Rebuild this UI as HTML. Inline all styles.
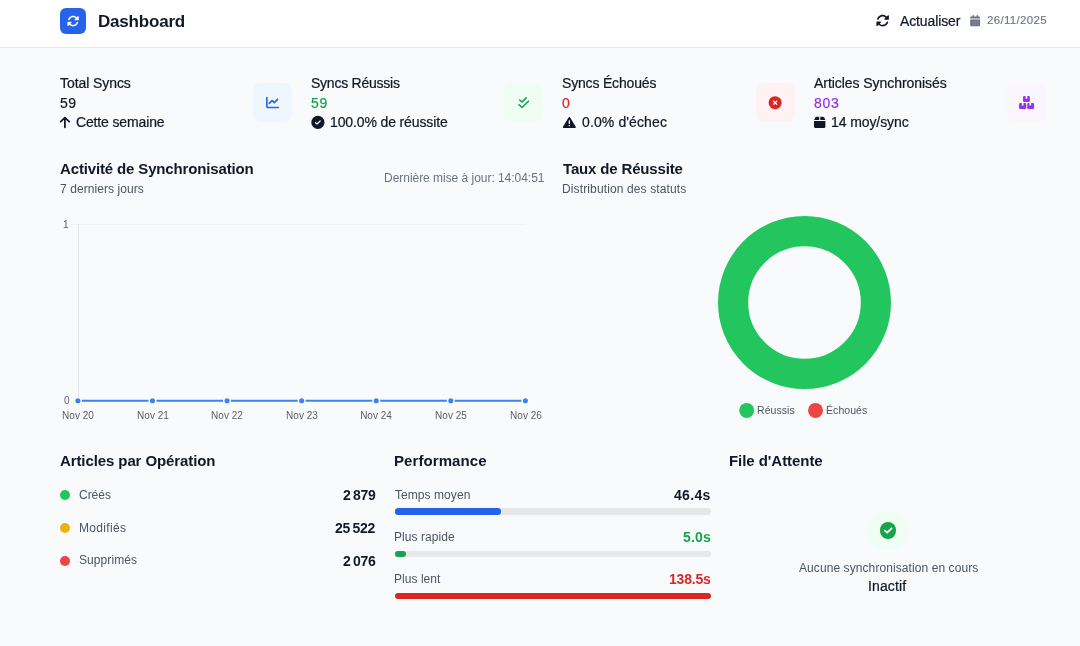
<!DOCTYPE html>
<html lang="fr">
<head>
<meta charset="utf-8">
<title>Dashboard</title>
<style>
*{box-sizing:border-box;margin:0;padding:0}
html,body{width:1080px;height:646px;overflow:hidden}
body{background:#f9fafb;font-family:"Liberation Sans",sans-serif;color:#111827;position:relative}
.t{position:absolute;white-space:nowrap;will-change:transform}
.hd{position:absolute;left:0;top:0;width:1080px;height:48px;background:#fff;border-bottom:1px solid #e8eaed}
.b{position:absolute}
svg{position:absolute;overflow:visible}
</style>
</head>
<body>
<div class="hd"></div>
<div class="b" style="left:60px;top:8px;width:26px;height:26px;border-radius:6px;background:#2563eb"></div>
<div class="t" style="top:12.91px;font-size:17px;line-height:17px;color:#111827;font-weight:700;letter-spacing:-0.193px;left:98.13px;">Dashboard</div>
<div class="t" style="top:13.65px;font-size:14px;line-height:14px;color:#111827;-webkit-text-stroke:0.22px #111827;letter-spacing:-0.125px;left:900.07px;">Actualiser</div>
<div class="t" style="top:15.12px;font-size:11.5px;line-height:11.5px;color:#6b7280;-webkit-text-stroke:0.12px #6b7280;letter-spacing:0.316px;left:986.72px;">26/11/2025</div>
<div class="t" style="top:76.40px;font-size:14px;line-height:14px;color:#111827;-webkit-text-stroke:0.22px #111827;letter-spacing:-0.077px;left:60.19px;">Total Syncs</div>
<div class="t" style="top:96.15px;font-size:14px;line-height:14px;color:#111827;-webkit-text-stroke:0.22px #111827;letter-spacing:0.400px;left:59.94px;">59</div>
<div class="t" style="top:115.15px;font-size:14px;line-height:14px;color:#111827;-webkit-text-stroke:0.22px #111827;letter-spacing:-0.142px;left:76.30px;">Cette semaine</div>
<div class="t" style="top:76.40px;font-size:14px;line-height:14px;color:#111827;-webkit-text-stroke:0.22px #111827;letter-spacing:-0.244px;left:310.87px;">Syncs Réussis</div>
<div class="t" style="top:96.15px;font-size:14px;line-height:14px;color:#16a34a;-webkit-text-stroke:0.22px #16a34a;letter-spacing:0.650px;left:310.94px;">59</div>
<div class="t" style="top:115.15px;font-size:14px;line-height:14px;color:#111827;-webkit-text-stroke:0.22px #111827;letter-spacing:-0.128px;left:330.44px;">100.0% de réussite</div>
<div class="t" style="top:76.40px;font-size:14px;line-height:14px;color:#111827;-webkit-text-stroke:0.22px #111827;letter-spacing:-0.176px;left:562.37px;">Syncs Échoués</div>
<div class="t" style="top:96.15px;font-size:14px;line-height:14px;color:#dc2626;-webkit-text-stroke:0.22px #dc2626;left:562.45px;">0</div>
<div class="t" style="top:115.15px;font-size:14px;line-height:14px;color:#111827;-webkit-text-stroke:0.22px #111827;letter-spacing:0.117px;left:582.45px;">0.0% d'échec</div>
<div class="t" style="top:76.40px;font-size:14px;line-height:14px;color:#111827;-webkit-text-stroke:0.22px #111827;letter-spacing:-0.052px;left:814.22px;">Articles Synchronisés</div>
<div class="t" style="top:96.15px;font-size:14px;line-height:14px;color:#9333ea;-webkit-text-stroke:0.22px #9333ea;letter-spacing:0.676px;left:813.90px;">803</div>
<div class="t" style="top:115.15px;font-size:14px;line-height:14px;color:#111827;-webkit-text-stroke:0.22px #111827;letter-spacing:-0.090px;left:831.44px;">14 moy/sync</div>
<div class="b" style="left:253px;top:83px;width:39px;height:39px;border-radius:8px;background:#eff6ff"></div>
<div class="b" style="left:504.25px;top:83px;width:39px;height:39px;border-radius:8px;background:#f0fdf4"></div>
<div class="b" style="left:755.5px;top:83px;width:39px;height:39px;border-radius:8px;background:#fef2f2"></div>
<div class="b" style="left:1006.75px;top:83px;width:39px;height:39px;border-radius:8px;background:#faf5ff"></div>
<div class="t" style="top:161.10px;font-size:15px;line-height:15px;color:#111827;font-weight:700;letter-spacing:-0.145px;left:60.14px;">Activité de Synchronisation</div>
<div class="t" style="top:161.10px;font-size:15px;line-height:15px;color:#111827;font-weight:700;letter-spacing:-0.159px;left:562.94px;">Taux de Réussite</div>
<div class="t" style="top:182.84px;font-size:12px;line-height:12px;color:#4b5563;letter-spacing:0.073px;left:59.89px;">7 derniers jours</div>
<div class="t" style="top:182.84px;font-size:12px;line-height:12px;color:#4b5563;letter-spacing:0.127px;left:562.12px;">Distribution des statuts</div>
<div class="t" style="top:171.64px;font-size:12px;line-height:12px;color:#6b7280;letter-spacing:-0.033px;left:383.72px;">Dernière mise à jour: 14:04:51</div>
<svg width="1080" height="646" style="left:0;top:0" viewBox="0 0 1080 646"><line x1="71" y1="224.5" x2="526" y2="224.5" stroke="#000" stroke-opacity="0.03" stroke-width="1"/><line x1="78.5" y1="224" x2="78.5" y2="401" stroke="#000" stroke-opacity="0.09" stroke-width="1"/><line x1="77.9" y1="400.75" x2="525.38" y2="400.75" stroke="#3b82f6" stroke-width="2"/><circle cx="77.90" cy="400.75" r="3.3" fill="#3b82f6" stroke="#fbfcfd" stroke-width="1.5"/><circle cx="152.48" cy="400.75" r="3.3" fill="#3b82f6" stroke="#fbfcfd" stroke-width="1.5"/><circle cx="227.06" cy="400.75" r="3.3" fill="#3b82f6" stroke="#fbfcfd" stroke-width="1.5"/><circle cx="301.64" cy="400.75" r="3.3" fill="#3b82f6" stroke="#fbfcfd" stroke-width="1.5"/><circle cx="376.22" cy="400.75" r="3.3" fill="#3b82f6" stroke="#fbfcfd" stroke-width="1.5"/><circle cx="450.80" cy="400.75" r="3.3" fill="#3b82f6" stroke="#fbfcfd" stroke-width="1.5"/><circle cx="525.38" cy="400.75" r="3.3" fill="#3b82f6" stroke="#fbfcfd" stroke-width="1.5"/><circle cx="804.5" cy="302.5" r="71.4" fill="none" stroke="#22c55e" stroke-width="30.2"/><circle cx="746.7" cy="410.4" r="7.5" fill="#22c55e"/><circle cx="815.5" cy="410.4" r="7.5" fill="#ef4444"/></svg>
<div class="t" style="top:220.13px;font-size:10px;line-height:10px;color:#5a5f66;right:1011.12px;">1</div>
<div class="t" style="top:396.04px;font-size:10px;line-height:10px;color:#5a5f66;right:1010.92px;">0</div>
<div class="t" style="top:410.64px;font-size:10px;line-height:10px;color:#5a5f66;letter-spacing:0.024px;left:-21.99px;width:200px;text-align:center;">Nov 20</div>
<div class="t" style="top:410.64px;font-size:10px;line-height:10px;color:#5a5f66;letter-spacing:0.044px;left:52.60px;width:200px;text-align:center;">Nov 21</div>
<div class="t" style="top:410.64px;font-size:10px;line-height:10px;color:#5a5f66;letter-spacing:0.048px;left:127.18px;width:200px;text-align:center;">Nov 22</div>
<div class="t" style="top:410.64px;font-size:10px;line-height:10px;color:#5a5f66;letter-spacing:0.034px;left:201.76px;width:200px;text-align:center;">Nov 23</div>
<div class="t" style="top:410.64px;font-size:10px;line-height:10px;color:#5a5f66;letter-spacing:0.006px;left:276.32px;width:200px;text-align:center;">Nov 24</div>
<div class="t" style="top:410.64px;font-size:10px;line-height:10px;color:#5a5f66;letter-spacing:0.030px;left:350.91px;width:200px;text-align:center;">Nov 25</div>
<div class="t" style="top:410.64px;font-size:10px;line-height:10px;color:#5a5f66;letter-spacing:0.034px;left:425.50px;width:200px;text-align:center;">Nov 26</div>
<div class="t" style="top:404.86px;font-size:10.5px;line-height:10.5px;color:#4b5563;letter-spacing:0.048px;left:756.94px;">Réussis</div>
<div class="t" style="top:404.86px;font-size:10.5px;line-height:10.5px;color:#4b5563;letter-spacing:0.062px;left:825.94px;">Échoués</div>
<div class="t" style="top:453.40px;font-size:15px;line-height:15px;color:#111827;font-weight:700;letter-spacing:-0.098px;left:60.04px;">Articles par Opération</div>
<div class="t" style="top:453.40px;font-size:15px;line-height:15px;color:#111827;font-weight:700;letter-spacing:0.079px;left:394.41px;">Performance</div>
<div class="t" style="top:453.40px;font-size:15px;line-height:15px;color:#111827;font-weight:700;letter-spacing:-0.053px;left:729.41px;">File d'Attente</div>
<div class="b" style="left:60px;top:490px;width:10px;height:10px;border-radius:50%;background:#22c55e"></div>
<div class="t" style="top:488.94px;font-size:12px;line-height:12px;color:#4b5563;letter-spacing:-0.021px;left:79.30px;">Créés</div>
<div class="t" style="right:704.7px;top:488.35px;font-size:14px;line-height:14px;font-weight:700;letter-spacing:-0.28px"><span style="margin-right:2.4px">2</span>879</div>
<div class="b" style="left:60px;top:522.8px;width:10px;height:10px;border-radius:50%;background:#eab308"></div>
<div class="t" style="top:521.74px;font-size:12px;line-height:12px;color:#4b5563;letter-spacing:0.333px;left:78.92px;">Modifiés</div>
<div class="t" style="right:704.7px;top:521.15px;font-size:14px;line-height:14px;font-weight:700;letter-spacing:-0.28px"><span style="margin-right:2.4px">25</span>522</div>
<div class="b" style="left:60px;top:555.5px;width:10px;height:10px;border-radius:50%;background:#ef4444"></div>
<div class="t" style="top:554.44px;font-size:12px;line-height:12px;color:#4b5563;letter-spacing:0.077px;left:79.36px;">Supprimés</div>
<div class="t" style="right:704.7px;top:553.85px;font-size:14px;line-height:14px;font-weight:700;letter-spacing:-0.28px"><span style="margin-right:2.4px">2</span>076</div>
<div class="t" style="top:488.94px;font-size:12px;line-height:12px;color:#4b5563;letter-spacing:0.064px;left:395.14px;">Temps moyen</div>
<div class="t" style="top:487.95px;font-size:14px;line-height:14px;color:#111827;font-weight:700;letter-spacing:0.336px;right:368.90px;">46.4s</div>
<div class="b" style="left:395.3px;top:508.3px;width:315.5px;height:6.3px;border-radius:3.2px;background:#e5e7eb"></div>
<div class="b" style="left:395.3px;top:508.3px;width:105.6px;height:6.3px;border-radius:3.2px;background:#2563eb"></div>
<div class="t" style="top:531.14px;font-size:12px;line-height:12px;color:#4b5563;letter-spacing:0.068px;left:394.42px;">Plus rapide</div>
<div class="t" style="top:530.15px;font-size:14px;line-height:14px;color:#16a34a;font-weight:700;letter-spacing:0.179px;right:369.06px;">5.0s</div>
<div class="b" style="left:395.3px;top:550.5px;width:315.5px;height:6.3px;border-radius:3.2px;background:#e5e7eb"></div>
<div class="b" style="left:395.3px;top:550.5px;width:11.1px;height:6.3px;border-radius:3.2px;background:#16a34a"></div>
<div class="t" style="top:573.34px;font-size:12px;line-height:12px;color:#4b5563;letter-spacing:0.042px;left:394.42px;">Plus lent</div>
<div class="t" style="top:572.35px;font-size:14px;line-height:14px;color:#dc2626;font-weight:700;letter-spacing:-0.217px;right:369.45px;">138.5s</div>
<div class="b" style="left:395.3px;top:592.6px;width:315.5px;height:6.3px;border-radius:3.2px;background:#e5e7eb"></div>
<div class="b" style="left:395.3px;top:592.6px;width:315.5px;height:6.3px;border-radius:3.2px;background:#dc2626"></div>
<div class="b" style="left:868px;top:511px;width:39.6px;height:39.6px;border-radius:50%;background:#f0fdf4"></div>
<div class="b" style="left:879.6px;top:522.4px;width:16.6px;height:16.6px;border-radius:50%;background:#16a34a"></div>
<div class="t" style="top:562.04px;font-size:12px;line-height:12px;color:#4b5563;letter-spacing:0.083px;left:798.68px;">Aucune synchronisation en cours</div>
<div class="t" style="top:578.95px;font-size:14px;line-height:14px;color:#111827;-webkit-text-stroke:0.22px #111827;letter-spacing:0.135px;left:868.21px;">Inactif</div>
<svg width="12.16" height="12.16" viewBox="0 0 512 512" style="left:66.92px;top:14.67px"><path fill="#fff" d="M142.900 142.900c62.200-62.200 162.700-62.500 225.300-1L327 183c-6.900 6.900-8.900 17.200-5.200 26.200s12.500 14.800 22.200 14.800H463.500c0 0 0 0 0 0H472c13.300 0 24-10.700 24-24V72c0-9.700-5.800-18.500-14.800-22.200s-19.300-1.700-26.200 5.200L413.400 96.600c-87.600-86.500-228.700-86.200-315.800 1C73.200 122 55.600 150.700 44.800 181.400c-5.900 16.700 2.900 34.900 19.500 40.800s34.900-2.900 40.800-19.500c7.700-21.800 20.200-42.300 37.800-59.800zM16 312v7.600 .7V440c0 9.700 5.800 18.500 14.800 22.200s19.300 1.700 26.200-5.200l41.600-41.600c87.600 86.500 228.700 86.200 315.800-1c24.400-24.400 42.100-53.100 52.900-83.700c5.900-16.700-2.900-34.900-19.500-40.800s-34.900 2.900-40.800 19.500c-7.700 21.800-20.200 42.300-37.800 59.800c-62.200 62.200-162.700 62.500-225.300 1L185 329c6.900-6.900 8.900-17.200 5.200-26.200s-12.500-14.800-22.200-14.800H48.400h-.7H40c-13.300 0-24 10.700-24 24z"/></svg>
<svg width="13.33" height="13.33" viewBox="0 0 512 512" style="left:876.38px;top:14.17px"><path fill="#111827" d="M142.900 142.900c62.200-62.200 162.700-62.500 225.300-1L327 183c-6.900 6.900-8.900 17.200-5.200 26.200s12.500 14.800 22.200 14.800H463.500c0 0 0 0 0 0H472c13.300 0 24-10.700 24-24V72c0-9.700-5.800-18.500-14.800-22.200s-19.300-1.700-26.200 5.200L413.400 96.600c-87.600-86.500-228.700-86.200-315.800 1C73.200 122 55.600 150.700 44.800 181.400c-5.900 16.700 2.900 34.900 19.500 40.800s34.900-2.900 40.800-19.500c7.700-21.800 20.200-42.300 37.800-59.800zM16 312v7.600 .7V440c0 9.700 5.800 18.500 14.800 22.200s19.300 1.700 26.200-5.200l41.600-41.600c87.600 86.500 228.700 86.200 315.800-1c24.400-24.400 42.100-53.100 52.900-83.700c5.900-16.700-2.900-34.900-19.500-40.800s-34.900 2.900-40.800 19.500c-7.700 21.800-20.200 42.300-37.800 59.800c-62.200 62.200-162.700 62.500-225.300 1L185 329c6.900-6.900 8.900-17.200 5.200-26.200s-12.500-14.800-22.200-14.800H48.400h-.7H40c-13.300 0-24 10.700-24 24z"/></svg>
<svg width="13.2" height="13.2" viewBox="0 0 512 512" style="left:265.8px;top:96.45px"><path fill="#2563eb" d="M64 64c0-17.700-14.300-32-32-32S0 46.300 0 64V400c0 44.200 35.800 80 80 80H480c17.700 0 32-14.300 32-32s-14.300-32-32-32H80c-8.800 0-16-7.200-16-16V64zm406.600 86.600c12.500-12.500 12.500-32.800 0-45.300s-32.800-12.500-45.300 0L320 210.700l-57.400-57.400c-12.500-12.500-32.800-12.500-45.300 0l-112 112c-12.500 12.500-12.500 32.800 0 45.300s32.800 12.500 45.300 0L240 221.300l57.400 57.400c12.500 12.500 32.800 12.500 45.300 0l128-128z"/></svg>
<svg width="1080" height="646" viewBox="0 0 1080 646" style="left:0;top:0"><g fill="#6b7280"><rect x="972.5" y="15" width="1.5" height="3" rx="0.7"/><rect x="976.6" y="15" width="1.5" height="3" rx="0.7"/><path d="M970.2 18.3v-0.6a1.1 1.1 0 0 1 1.100-1.100h7.700a1.100 1.100 0 0 1 1.100 1.100v0.600z"/><path d="M970.2 19.800h9.900v5.400a1.100 1.100 0 0 1 -1.100 1.100h-7.700a1.100 1.100 0 0 1 -1.100-1.100z"/></g><rect x="970.2" y="18.300" width="9.900" height="1.500" fill="#6b7280" fill-opacity="0.45"/><g fill="#fff" fill-opacity="0.22"><rect x="972.3" y="21.3" width="1.4" height="1.4"/><rect x="972.3" y="23.5" width="1.4" height="1.4"/><rect x="974.7" y="21.3" width="1.4" height="1.4"/><rect x="974.7" y="23.5" width="1.4" height="1.4"/><rect x="977.1" y="21.3" width="1.4" height="1.4"/><rect x="977.1" y="23.5" width="1.4" height="1.4"/></g><g fill="none" stroke="#16a34a" stroke-width="1.6" stroke-linecap="round" stroke-linejoin="round"><path d="M519.800 100.100L522.050 102.000L526.200 97.900"/><path d="M519.000 104.750L522.050 107.500L528.500 101.200"/></g><circle cx="775.15" cy="102.700" r="6.550" fill="#dc2626"/><path d="M773.600 101.250l3.100 3.100m0-3.100l-3.100 3.100" stroke="#fff" stroke-width="1.300" stroke-linecap="round" fill="none"/><g fill="#9333ea"><path d="M1024.25 96.05H1025.65V98.65H1027.3V96.05H1028.7a1.2 1.2 0 0 1 1.2 1.2V100.7a1.2 1.2 0 0 1 -1.2 1.2H1024.25a1.2 1.2 0 0 1 -1.2-1.2V97.25a1.2 1.2 0 0 1 1.2-1.2z"/><path d="M1020.25 103.1H1021.8V105.5H1023.5V103.1H1025.05a1.2 1.2 0 0 1 1.2 1.2V107.7a1.2 1.2 0 0 1 -1.2 1.2H1020.25a1.2 1.2 0 0 1 -1.2-1.2V104.3a1.2 1.2 0 0 1 1.2-1.2z"/><path d="M1028.45 103.1H1029.45V105.5H1031.15V103.1H1032.95a1.2 1.2 0 0 1 1.2 1.2V107.7a1.2 1.2 0 0 1 -1.2 1.2H1028.45a1.2 1.2 0 0 1 -1.2-1.2V104.3a1.2 1.2 0 0 1 1.2-1.2z"/></g><path d="M60.700 121.600L64.900 117.600L69.200 121.600M64.900 117.800V127.300" fill="none" stroke="#111827" stroke-width="1.750" stroke-linecap="round" stroke-linejoin="round"/><circle cx="317.900" cy="122.400" r="6.600" fill="#111827"/><path d="M315.550 122.750L317.050 123.950L320.250 120.850" fill="none" stroke="#fff" stroke-width="1.250" stroke-linecap="round" stroke-linejoin="round"/><path d="M569.350 117.500L575.150 127.200H563.550z" fill="#111827" stroke="#111827" stroke-width="1.400" stroke-linejoin="round"/><rect x="568.700" y="120.300" width="1.300" height="3.800" rx="0.500" fill="#fff"/><rect x="568.700" y="125.100" width="1.300" height="1.200" rx="0.500" fill="#fff"/><g fill="#111827"><path d="M814.150 119.950l1.150-2.350a1.700 1.700 0 0 1 1.500-.950h2.400v3.300z"/><path d="M825.350 119.950l-1.150-2.350a1.700 1.700 0 0 0 -1.500-.950h-2.400v3.300z"/><path d="M814 121h11.400v5.500a1.500 1.500 0 0 1 -1.500 1.500h-8.400a1.500 1.500 0 0 1 -1.500-1.500z"/></g><path d="M884.900 530.600L887.200 532.700L891.600 528.300" fill="none" stroke="#fff" stroke-width="1.800" stroke-linecap="round" stroke-linejoin="round"/></svg>
</body>
</html>
